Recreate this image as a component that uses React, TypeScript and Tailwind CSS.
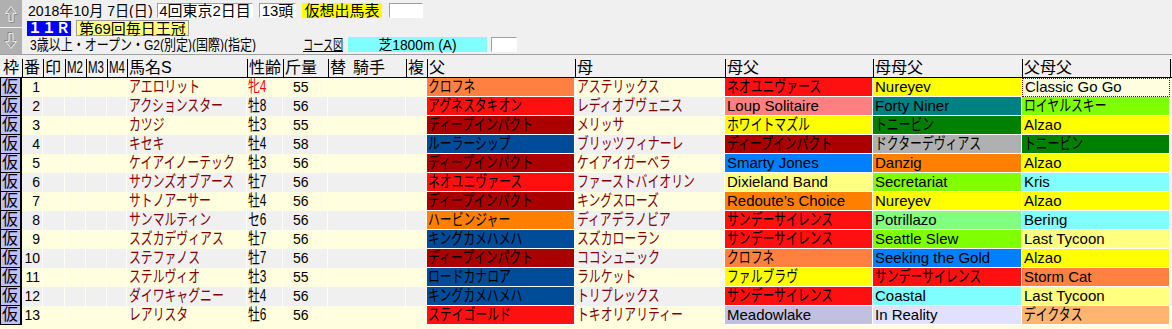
import React from 'react';

type Cell = { t: string; bg: string };
type Horse = {
  no: string;
  name: string;
  sex: string;
  kg: string;
  sire: Cell;
  dam: string;
  bms: Cell;
  mmf: Cell;
  fmf: Cell;
};

const coral = 'bg-[#ff8040]';
const red = 'bg-[#ff1010]';
const dred = 'bg-[#aa0000]';
const blue = 'bg-[#004c99]';
const orange = 'bg-[#ff8000]';
const salmon = 'bg-[#ff8080]';
const yellow = 'bg-[#ffff00]';
const pale = 'bg-[#ffff80]';
const sky = 'bg-[#0080ff]';
const lav = 'bg-[#c0c0e0]';
const teal = 'bg-[#008080]';
const green = 'bg-[#008000]';
const gray = 'bg-[#b0b0b0]';
const lime = 'bg-[#80ff00]';
const mint = 'bg-[#80ff80]';
const cyan = 'bg-[#80ffff]';
const lilac = 'bg-[#e0e0ff]';
const peach = 'bg-[#ffb470]';
const focus = 'focus';

const horses: Horse[] = [
  { no: '1', name: 'アエロリット', sex: '牝4', kg: '55', sire: { t: 'クロフネ', bg: coral }, dam: 'アステリックス', bms: { t: 'ネオユニヴァース', bg: red }, mmf: { t: 'Nureyev', bg: yellow }, fmf: { t: 'Classic Go Go', bg: focus } },
  { no: '2', name: 'アクションスター', sex: '牡8', kg: '56', sire: { t: 'アグネスタキオン', bg: red }, dam: 'レディオブヴェニス', bms: { t: 'Loup Solitaire', bg: salmon }, mmf: { t: 'Forty Niner', bg: teal }, fmf: { t: 'ロイヤルスキー', bg: lime } },
  { no: '3', name: 'カツジ', sex: '牡3', kg: '55', sire: { t: 'ディープインパクト', bg: dred }, dam: 'メリッサ', bms: { t: 'ホワイトマズル', bg: yellow }, mmf: { t: 'トニービン', bg: green }, fmf: { t: 'Alzao', bg: yellow } },
  { no: '4', name: 'キセキ', sex: '牡4', kg: '58', sire: { t: 'ルーラーシップ', bg: blue }, dam: 'ブリッツフィナーレ', bms: { t: 'ディープインパクト', bg: dred }, mmf: { t: 'ドクターデヴィアス', bg: gray }, fmf: { t: 'トニービン', bg: green } },
  { no: '5', name: 'ケイアイノーテック', sex: '牡3', kg: '56', sire: { t: 'ディープインパクト', bg: dred }, dam: 'ケイアイガーベラ', bms: { t: 'Smarty Jones', bg: sky }, mmf: { t: 'Danzig', bg: orange }, fmf: { t: 'Alzao', bg: yellow } },
  { no: '6', name: 'サウンズオブアース', sex: '牡7', kg: '56', sire: { t: 'ネオユニヴァース', bg: red }, dam: 'ファーストバイオリン', bms: { t: 'Dixieland Band', bg: pale }, mmf: { t: 'Secretariat', bg: lime }, fmf: { t: 'Kris', bg: cyan } },
  { no: '7', name: 'サトノアーサー', sex: '牡4', kg: '56', sire: { t: 'ディープインパクト', bg: dred }, dam: 'キングスローズ', bms: { t: 'Redoute’s Choice', bg: orange }, mmf: { t: 'Nureyev', bg: yellow }, fmf: { t: 'Alzao', bg: yellow } },
  { no: '8', name: 'サンマルティン', sex: 'セ6', kg: '56', sire: { t: 'ハービンジャー', bg: orange }, dam: 'ディアデラノビア', bms: { t: 'サンデーサイレンス', bg: red }, mmf: { t: 'Potrillazo', bg: mint }, fmf: { t: 'Bering', bg: cyan } },
  { no: '9', name: 'スズカデヴィアス', sex: '牡7', kg: '56', sire: { t: 'キングカメハメハ', bg: blue }, dam: 'スズカローラン', bms: { t: 'サンデーサイレンス', bg: red }, mmf: { t: 'Seattle Slew', bg: lime }, fmf: { t: 'Last Tycoon', bg: pale } },
  { no: '10', name: 'ステファノス', sex: '牡7', kg: '56', sire: { t: 'ディープインパクト', bg: dred }, dam: 'ココシュニック', bms: { t: 'クロフネ', bg: coral }, mmf: { t: 'Seeking the Gold', bg: sky }, fmf: { t: 'Alzao', bg: yellow } },
  { no: '11', name: 'ステルヴィオ', sex: '牡3', kg: '55', sire: { t: 'ロードカナロア', bg: blue }, dam: 'ラルケット', bms: { t: 'ファルブラヴ', bg: yellow }, mmf: { t: 'サンデーサイレンス', bg: red }, fmf: { t: 'Storm Cat', bg: coral } },
  { no: '12', name: 'ダイワキャグニー', sex: '牡4', kg: '56', sire: { t: 'キングカメハメハ', bg: blue }, dam: 'トリプレックス', bms: { t: 'サンデーサイレンス', bg: red }, mmf: { t: 'Coastal', bg: cyan }, fmf: { t: 'Last Tycoon', bg: pale } },
  { no: '13', name: 'レアリスタ', sex: '牡6', kg: '56', sire: { t: 'ステイゴールド', bg: red }, dam: 'トキオリアリティー', bms: { t: 'Meadowlake', bg: lav }, mmf: { t: 'In Reality', bg: lilac }, fmf: { t: 'デイクタス', bg: peach } },
];

const isAscii = (s: string) => /^[\x00-\x7f’]*$/.test(s);

// kana/kanji in the original are drawn narrower than a square glyph
const Txt: React.FC<{ s: string; className?: string }> = ({ s, className = '' }) =>
  isAscii(s) ? (
    <span className={`whitespace-nowrap ${className}`}>{s}</span>
  ) : (
    <span className={`inline-block origin-left scale-x-[0.74] whitespace-nowrap text-[16px] ${className}`}>{s}</span>
  );

const cols = [
  { w: 'w-[22px]', label: '枠' },
  { w: 'w-[21px]', label: '番' },
  { w: 'w-[22px]', label: '印' },
  { w: 'w-[21px]', label: 'M2' },
  { w: 'w-[21px]', label: 'M3' },
  { w: 'w-[20px]', label: 'M4' },
  { w: 'w-[120px]', label: '馬名S' },
  { w: 'w-[36px]', label: '性齢' },
  { w: 'w-[45px]', label: '斤量' },
  { w: 'w-[78px]', label: '騎手' },
  { w: 'w-[21px]', label: '複' },
  { w: 'w-[148px]', label: '父' },
  { w: 'w-[150px]', label: '母' },
  { w: 'w-[148px]', label: '母父' },
  { w: 'w-[149px]', label: '母母父' },
  { w: 'w-[148px]', label: '父母父' },
];

const ArrowBtn: React.FC<{ up?: boolean }> = ({ up }) => (
  <div className={`flex items-center justify-center bg-[#b0b0b0] ${up ? 'h-[27px]' : 'h-[26px]'}`}>
    <svg width="22" height="22" viewBox="0 0 22 22">
      <g fill="none" strokeWidth="1" transform={up ? undefined : 'rotate(180 11 11)'}>
        <path d="M12 4.5 L6.5 11.5 H10 V19.5 H14 V11.5 H17.5 Z" stroke="#8a8a8a" />
        <path d="M11 3.5 L5.5 10.5 H9 V18.5 H13 V10.5 H16.5 Z" stroke="#ececec" />
      </g>
    </svg>
  </div>
);

const box = 'flex h-[15px] items-center justify-center border-t border-l border-[#a0a0a0] border-b-white border-r-white border-b border-r';

function ColorCell({ c, w, pad = 'pl-[2px]' }: { c: Cell; w: string; pad?: string }) {
  if (c.bg === focus) {
    return (
      <div className={`${w} shrink-0 overflow-hidden border border-dotted border-[#800000] bg-[#ffffe0] pl-[2px] leading-[16px]`}>
        <Txt s={c.t} />
      </div>
    );
  }
  return (
    <div className={`${w} shrink-0 overflow-hidden border-r border-b border-white ${c.bg} ${pad}`}>
      <Txt s={c.t} />
    </div>
  );
}

function HorseRow({ h, i }: { h: Horse; i: number }) {
  const bg = i % 2 === 0 ? 'bg-[#ffffe0]' : 'bg-[#f0f0f0]';
  const sep = 'border-r border-[#fffff0]';
  return (
    <div className={`flex h-[19px] ${bg} text-[15px] leading-[18px] text-black`}>
      <div className="w-[22px] shrink-0 border-l border-r-2 border-b border-black bg-[#c0c0ff] pl-[1px] text-[16px] leading-[17px]">仮</div>
      <div className={`w-[21px] shrink-0 ${sep} pr-[2px] text-right text-[14px]`}>{h.no}</div>
      <div className={`w-[22px] shrink-0 ${sep}`} />
      <div className={`w-[21px] shrink-0 ${sep}`} />
      <div className={`w-[21px] shrink-0 ${sep}`} />
      <div className={`w-[20px] shrink-0 ${sep}`} />
      <div className={`w-[120px] shrink-0 overflow-hidden ${sep} pl-[2px] text-[#800000]`}>
        <Txt s={h.name} />
      </div>
      <div className={`w-[36px] shrink-0 overflow-hidden ${sep} pl-[1px] ${h.sex === '牝4' ? 'text-[#ff0000]' : ''}`}>
        <Txt s={h.sex} />
      </div>
      <div className={`w-[45px] shrink-0 ${sep} pl-[10px] text-[14px]`}>{h.kg}</div>
      <div className={`w-[78px] shrink-0 ${sep}`} />
      <div className={`w-[21px] shrink-0 ${sep}`} />
      <ColorCell c={h.sire} w="w-[148px]" pad="pl-[1px]" />
      <div className={`w-[150px] shrink-0 overflow-hidden ${sep} pl-[2px] text-[#800000]`}>
        <Txt s={h.dam} />
      </div>
      <ColorCell c={h.bms} w="w-[148px]" />
      <ColorCell c={h.mmf} w="w-[149px]" />
      <ColorCell c={h.fmf} w="w-[148px]" />
    </div>
  );
}

export default function App() {
  return (
    <div className="h-[329px] w-[1172px] overflow-hidden bg-[#ffffe0] text-black [font-family:'Liberation_Sans','Noto_Sans_CJK_JP',sans-serif]">
      {/* race info panel */}
      <div className="flex h-[55px] border-b border-[#a0a0a0] bg-[#f0f0f0] text-[15px]">
        <div className="flex w-[22px] shrink-0 flex-col gap-[1px]">
          <ArrowBtn up />
          <ArrowBtn />
        </div>
        <div className="flex flex-col">
          <div className="mt-[3px] flex h-[15px] items-center leading-[15px]">
            <div className="ml-[6px] w-[129px] overflow-hidden">
              <span className="inline-block origin-left scale-x-[0.94] whitespace-nowrap">2018年10月 7日(日)</span>
            </div>
            <div className={`${box} w-[96px] bg-white`}>4回東京2日目</div>
            <div className={`${box} ml-[6px] w-[37px] bg-white`}>13頭</div>
            <div className="ml-[6px] flex h-[15px] w-[80px] items-center justify-center bg-[#ffff00]">仮想出馬表</div>
            <div className={`${box} ml-[7px] w-[34px] bg-white`} />
          </div>
          <div className="mt-[2px] flex h-[16px] items-center leading-[15px]">
            <div className="ml-[5px] flex h-[15px] w-[44px] items-center justify-center bg-[#0000ff] text-[14px] font-bold text-white">１１Ｒ</div>
            <div className="ml-[5px] flex h-[16px] w-[113px] items-center justify-center border border-[#a0a0a0] bg-[#ffff80]">第69回毎日王冠</div>
          </div>
          <div className="mt-[1px] flex h-[15px] items-center leading-[15px]">
            <div className="ml-[8px] w-[273px] overflow-hidden">
              <span className="inline-block origin-left scale-x-[0.8] whitespace-nowrap">3歳以上・オープン・G2(別定)(国際)(指定)</span>
            </div>
            <div className="w-[40px] overflow-hidden">
              <span className="inline-block origin-left scale-x-[0.68] whitespace-nowrap underline">コース図</span>
            </div>
            <div className="ml-[5px] flex h-[15px] w-[139px] items-center justify-center bg-[#80ffff]">
              <span className="inline-block scale-x-[0.92] whitespace-nowrap">芝1800m (A)</span>
            </div>
            <div className={`${box} ml-[4px] w-[26px] bg-white`} />
          </div>
        </div>
      </div>

      {/* column header */}
      <div className="flex h-[23px] border-b border-black bg-[#f0f0f0] text-[16px]">
        {cols.map((c, i) => (
          <div key={c.label} className={`${c.w} flex shrink-0 items-end`}>
            <div
              className={`h-[18px] w-full overflow-hidden whitespace-nowrap leading-[18px] ${
                i === 0 ? 'pl-[3px]' : 'border-l border-black pl-[1px]'
              }`}
            >
              {c.label === '騎手' ? (
                <>
                  <span>替</span>
                  <span className="ml-[7px]">騎手</span>
                </>
              ) : c.label.startsWith('M') ? (
                <span className="inline-block origin-left scale-x-[0.72]">{c.label}</span>
              ) : (
                c.label
              )}
            </div>
          </div>
        ))}
        <div className="flex w-[2px] shrink-0 items-end">
          <div className="h-[18px] border-l border-black" />
        </div>
      </div>

      {horses.map((h, i) => (
        <HorseRow key={h.no} h={h} i={i} />
      ))}
    </div>
  );
}
